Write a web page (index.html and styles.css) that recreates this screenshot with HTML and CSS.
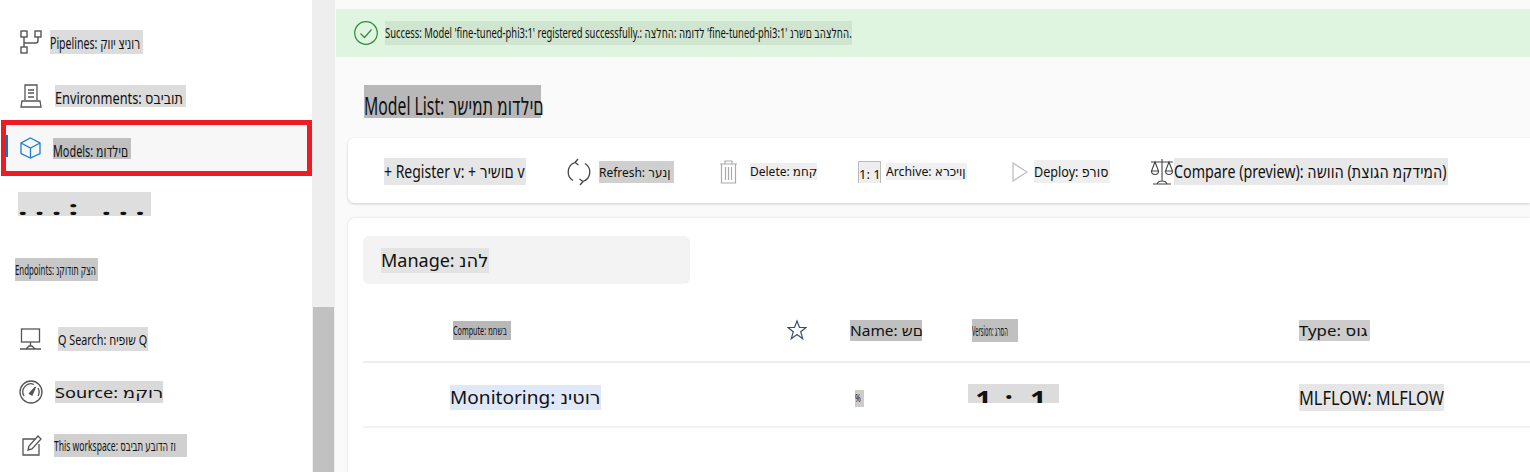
FILE: index.html
```html
<!DOCTYPE html>
<html>
	<head>
		<title>Model List</title>
		<link rel="stylesheet" href="styles.css">
	</head>
	<body>
		<nav class="sidebar">
			<a class="nav-item nav-pipelines">
				<svg class="icon" width="22" height="24" viewBox="0 0 22 24" fill="none" stroke="#555" stroke-width="1.4"><rect x="1" y="1" width="6" height="6"/><rect x="15" y="1" width="6" height="6"/><rect x="1" y="17" width="6" height="6"/><path d="M4 7v10M4 13h11.500q2.500 0 2.500-2.500V7"/></svg>
				<span class="label l-pipelines"><span>Pipelines: קווי צינור</span></span>
			</a>
			<a class="nav-item nav-env">
				<svg class="icon" width="22" height="24" viewBox="0 0 22 24" fill="none" stroke="#555" stroke-width="1.3"><path d="M5 16V1h12v15M1 23l1-6h18l1 6zM8 6h6M8 9h6M8 13h6"/></svg>
				<span class="label l-env"><span>Environments: סביבות</span></span>
			</a>
			<a class="nav-item nav-models">
				<i class="active-bar"></i>
				<svg class="icon" width="21" height="22" viewBox="0 0 21 22" fill="none" stroke="#1a7fd0" stroke-width="1.3"><path d="M10.500 1 20 6v10.500L10.500 21 1 16.500V6zM1 6l9.500 5L20 6M10.500 11v10"/></svg>
				<span class="label l-models"><span>Models: מודלים</span></span>
			</a>
			<a class="nav-item nav-garbled">
				<span class="label l-garbled"><span>...: ...</span></span>
			</a>
			<a class="nav-item nav-endpoints">
				<span class="label l-endpoints"><span>Endpoints: נקודות קצה</span></span>
			</a>
			<a class="nav-item nav-search">
				<svg class="icon" width="21" height="23" viewBox="0 0 21 23" fill="none" stroke="#555" stroke-width="1.3"><rect x="1.500" y="1" width="18" height="13"/><path d="M10.500 14v4M6 21l3-3h3l3 3H6zM0 21h21"/></svg>
				<span class="label l-search"><span>Q Search: חיפוש Q</span></span>
			</a>
			<a class="nav-item nav-source">
				<svg class="icon" width="24" height="26" viewBox="0 0 24 26" fill="none" stroke="#555" stroke-width="1.3"><circle cx="12" cy="13" r="11"/><path d="M5 17a8 8 0 0 1 10-11.500M19 9a8 8 0 0 1 0 8"/><path d="M10.500 14.500 16.500 8l-3.500 8z" fill="#555"/></svg>
				<span class="label l-source"><span>Source: מקור</span></span>
			</a>
			<a class="nav-item nav-workspace">
				<svg class="icon" width="20" height="21" viewBox="0 0 20 21" fill="none" stroke="#555" stroke-width="1.3"><path d="M14 4H1v16h16V9M7 11l-1 4 4-1L19 4l-3-3z"/></svg>
				<span class="label l-workspace"><span>This workspace: סביבת עבודה זו</span></span>
			</a>
		</nav>
		<div class="scrollbar"><div class="scroll-thumb"></div></div>
		<main class="content">
			<div class="banner">
				<svg width="24" height="24" viewBox="0 0 24 24" fill="none" stroke="#2e8b3d" stroke-width="1.200"><circle cx="12" cy="12" r="11.300"/><path d="m6.500 12.500 4 4 7-8"/></svg>
				<span class="label l-banner"><span>Success: Model 'fine-tuned-phi3:1' registered successfully.: הצלחה: המודל 'fine-tuned-phi3:1' נרשם בהצלחה.</span></span>
			</div>
			<h1 class="label l-title"><span>Model List: רשימת מודלים</span></h1>
			<div class="toolbar">
				<span class="label l-register"><span>+ Register v: + רישום v</span></span>
				<svg class="tb-refresh" width="26" height="28" viewBox="0 0 26 28" fill="none" stroke="#444" stroke-width="1.300"><path d="M9 4.500a10 10 0 0 0-2 18M17 23.500a10 10 0 0 0 2-18M12 1 9 4.500l3.500 2.500M14 27l3-3.500-3.500-2.500"/></svg>
				<span class="label l-refresh"><span>Refresh: רענן</span></span>
				<svg class="tb-trash" width="19" height="24" viewBox="0 0 19 24" fill="none" stroke="#aaa" stroke-width="1.200"><path d="M1 4h17M6 4V1h7v3M2.500 4v19h14V4M6.500 7v13M9.500 7v13M12.500 7v13"/></svg>
				<span class="label l-delete"><span>Delete: מחק</span></span>
				<span class="label l-ratio"><span>1: 1</span></span>
				<span class="label l-archive"><span>Archive: ארכיון</span></span>
				<svg class="tb-deploy" width="16" height="20" viewBox="0 0 16 20" fill="none" stroke="#bbb" stroke-width="1.200"><path d="M1 1v18l14-9z"/></svg>
				<span class="label l-deploy"><span>Deploy: פרוס</span></span>
				<svg class="tb-compare" width="24" height="27" viewBox="0 0 24 27" fill="none" stroke="#444" stroke-width="1.100"><path d="M12 1v22M1 4h22M5 4 1.500 13h7zM19 4l-3.500 9h7zM1.500 13a3.500 3.500 0 0 0 7 0M15.500 13a3.500 3.500 0 0 0 7 0M7 26q1-3 5-3t5 3zM3 26h18"/></svg>
				<span class="label l-compare"><span>Compare (preview): השווה (תצוגה מקדימה)</span></span>
			</div>
			<section class="card">
				<div class="label l-manage"><span>Manage: נהל</span></div>
				<div class="row row-head">
					<div class="col-a"><span class="label l-compute"><span>Compute: מחשב</span></span></div>
					<div class="col-b"><svg class="star" width="20" height="22" viewBox="0 0 20 22" fill="none" stroke="#34506e" stroke-width="1.200"><path d="M10 2l2.500 6.500H19l-5.300 4.200 2 7L10 15.600 4.300 19.700l2-7L1 8.500h6.500z"/></svg></div>
					<div class="col-c"><span class="label l-name"><span>Name: שם</span></span></div>
					<div class="col-d"><span class="label l-version"><span>Version: גרסה</span></span></div>
					<div class="col-e"><span class="label l-type"><span>Type: סוג</span></span></div>
				</div>
				<div class="row row-body">
					<div class="col-a"><span class="label l-monitoring"><span>Monitoring: ניטור</span></span></div>
					<div class="col-b"></div>
					<div class="col-c"><span class="label l-glitch"><span>%</span></span></div>
					<div class="col-d"><span class="label l-one"><span>1: 1</span></span></div>
					<div class="col-e"><span class="label l-mlflow"><span>MLFLOW: MLFLOW</span></span></div>
				</div>
			</section>
		</main>
	</body>
</html>
```

FILE: styles.css
```css
html, body {
	margin: 0;
	height: 100%;
}

body {
	display: flex;
	height: 472px;
	overflow: hidden;
	background: #fff;
	color: #111;
	font-family: "Noto Sans", "DejaVu Sans", sans-serif;
	font-size: 14px;
}

/* every text sits in a fixed box and is squeezed to fit, like the screenshot */
.label {
	display: inline-block;
	flex: none;
	margin: 0;
	font-weight: 400;
}

.label > span {
	display: block;
	white-space: nowrap;
	direction: ltr;
	unicode-bidi: bidi-override;
	transform-origin: 0 50%;
}

/* sidebar */
.sidebar {
	flex: none;
	width: 312px;
	box-sizing: border-box;
	padding-top: 13px;
}

.nav-item {
	display: flex;
	align-items: center;
	position: relative;
	box-sizing: border-box;
	padding-left: 20px;
}

.icon {
	flex: none;
}

.nav-pipelines { height: 58px; }
.nav-env { height: 49px; }
.nav-models {
	height: 56px;
	margin-left: 1px;
	padding-left: 14px;
	border: 5px solid #ed1c24;
	background: #f7f7f7;
}
.nav-garbled { height: 56px; padding-left: 18px; }
.nav-endpoints { height: 74px; padding-left: 15px; }
.nav-search { height: 66px; }
.nav-source { height: 40px; padding-left: 19px; }
.nav-workspace { height: 60px; padding-top: 6px; padding-left: 22px; }

.active-bar {
	position: absolute;
	left: 0;
	top: 10px;
	width: 2px;
	height: 22px;
	background: #0078d4;
}

.l-pipelines { width: 93px; height: 24px; margin-left: 8px; background: #dcdcdc; }
.l-pipelines > span { font-size: 16px; line-height: 26px; transform: scaleX(.66); }
.l-env { width: 131px; height: 22px; margin-left: 13px; background: #dcdcdc; }
.l-env > span { font-size: 16px; line-height: 26px; transform: scaleX(.8); }
.l-models { width: 78px; height: 21px; margin-left: 12px; margin-top: 1px; background: #c0c0c0; }
.l-models > span { font-size: 16px; line-height: 26px; transform: scaleX(.68); }
.l-garbled { width: 133px; height: 24px; overflow: hidden; background: #dedede; }
.l-garbled > span { font-size: 20px; font-weight: 700; line-height: 31px; letter-spacing: 4.300px; transform: scaleX(1.7); }
.l-endpoints { width: 83px; height: 23px; background: #c8c8c8; }
.l-endpoints > span { font-size: 14px; line-height: 23px; transform: scaleX(.56); }
.l-search { width: 90px; height: 24px; margin-left: 17px; background: #dcdcdc; }
.l-search > span { font-size: 15px; line-height: 24px; transform: scaleX(.72); }
.l-source { width: 108px; height: 22px; margin-left: 12px; background: #d9d9d9; }
.l-source > span { font-size: 15px; line-height: 22px; transform: scaleX(1.21); }
.l-workspace { width: 133px; height: 23px; margin-left: 12px; background: #d0d0d0; }
.l-workspace > span { font-size: 15px; line-height: 23px; transform: scaleX(.57); }

/* fake page scrollbar */
.scrollbar {
	flex: none;
	width: 23px;
	box-sizing: border-box;
	padding-top: 307px;
	padding-left: 1px;
	background: #eee;
}

.scroll-thumb {
	width: 21px;
	height: 165px;
	background: #c1c1c1;
}

/* main column */
.content {
	flex: 1;
	min-width: 0;
	padding-top: 9px;
	background: #fafafa;
}

.banner {
	display: flex;
	align-items: center;
	height: 48px;
	margin-left: 1px;
	padding-left: 18px;
	background: #dff5df;
}

.l-banner { width: 467px; height: 24px; margin-left: 7px; background: #cfe5cf; }
.l-banner > span { font-size: 14px; line-height: 24px; transform: scaleX(.672); }

.l-title { display: block; width: 177px; height: 33px; margin: 28px 0 20px 29px; background: #b8b8b8; }
.l-title > span { font-size: 25px; line-height: 41px; transform: scaleX(.63); }

.toolbar {
	display: flex;
	align-items: center;
	height: 65px;
	box-sizing: border-box;
	margin-left: 13px;
	padding: 2px 0 0 36px;
	border-radius: 6px 0 0 6px;
	background: #fff;
	box-shadow: 0 1px 3px rgba(0, 0, 0, .18);
}

.l-register { width: 142px; height: 27px; background: #e6e6e6; }
.l-register > span { font-size: 18px; line-height: 27px; transform: scaleX(.778); }
.tb-refresh { margin-left: 40px; flex: none; }
.l-refresh { width: 75px; height: 22px; margin-left: 7px; background: #cfcfcf; }
.l-refresh > span { font-size: 13px; line-height: 22px; transform: scaleX(.92); }
.tb-trash { margin-left: 45px; flex: none; }
.l-delete { width: 67px; height: 17px; margin-left: 12px; background: #eee; }
.l-delete > span { font-size: 12px; line-height: 17px; }
.l-ratio { width: 21px; height: 21px; margin-left: 41px; border: 1px solid #bbb; border-bottom: 0; background: #eee; }
.l-ratio > span { font-size: 13px; line-height: 24px; text-align: center; }
.l-archive { width: 81px; height: 17px; margin-left: 5px; background: #f0f0f0; }
.l-archive > span { font-size: 13px; line-height: 17px; transform: scaleX(.94); }
.tb-deploy { margin-left: 45px; flex: none; }
.l-deploy { width: 76px; height: 23px; margin-left: 6px; background: #efefef; }
.l-deploy > span { font-size: 15px; line-height: 23px; transform: scaleX(.84); }
.tb-compare { margin-left: 40px; flex: none; }
.l-compare { width: 274px; height: 27px; background: #e8e8e8; }
.l-compare > span { font-size: 18px; line-height: 27px; transform: scaleX(.793); }

.card {
	box-sizing: border-box;
	height: 254px;
	margin: 15px 0 0 13px;
	padding: 18px 0 0 15px;
	border-radius: 8px 0 0 0;
	background: #fff;
	box-shadow: 0 0 3px rgba(0, 0, 0, .12);
}

.l-manage {
	display: block;
	box-sizing: border-box;
	width: 327px;
	height: 48px;
	padding: 12px 0 0 18px;
	border-radius: 6px;
	background: #f3f3f3;
}

.l-manage > span { display: inline-block; height: 25px; font-size: 18px; line-height: 25px; background: #e3e3e3; }

.row {
	display: grid;
	grid-template-columns: 424px 63px 122px 327px 1fr;
	align-items: center;
	box-sizing: content-box;
	border-bottom: 2px solid #eee;
}

.row-head { height: 62px; margin-top: 2px; padding-top: 13px; }
.row-body { height: 58px; padding-top: 5px; border-bottom-color: #f2f2f2; }

.col-a { padding-left: 90px; }
.star { display: block; }

.l-compute { width: 58px; height: 19px; background: #b8b8b8; }
.l-compute > span { font-size: 12px; line-height: 19px; transform: scaleX(.6); }
.l-name { width: 72px; height: 21px; background: #c0c0c0; }
.l-name > span { font-size: 15px; line-height: 21px; transform: scaleX(1.03); }
.l-version { width: 46px; height: 23px; background: #c0c0c0; }
.l-version > span { font-size: 15px; line-height: 23px; transform: scaleX(.38); }
.l-type { width: 71px; height: 21px; background: #ccc; }
.l-type > span { font-size: 15px; line-height: 21px; transform: scaleX(1.12); }
.l-monitoring { width: 151px; height: 25px; margin-left: -3px; background: #dfe8f8; }
.l-monitoring > span { font-size: 18px; line-height: 25px; transform: scaleX(1.06); }
.l-glitch { width: 9px; height: 17px; margin-left: 5px; background: #ccc; }
.l-glitch > span { font-size: 10px; line-height: 17px; transform: scaleX(.7); }
.l-one { width: 91px; height: 19px; margin-left: -4px; margin-top: -6px; overflow: hidden; background: #dcdcdc; }
.l-one > span { font-size: 24px; font-weight: 700; line-height: 29px; letter-spacing: 11px; word-spacing: -14px; padding-left: 6px; transform: scaleX(1.2); }
.l-mlflow { width: 145px; height: 27px; background: #e6e6e6; }
.l-mlflow > span { font-size: 20px; line-height: 27px; transform: scaleX(.82); }
```
